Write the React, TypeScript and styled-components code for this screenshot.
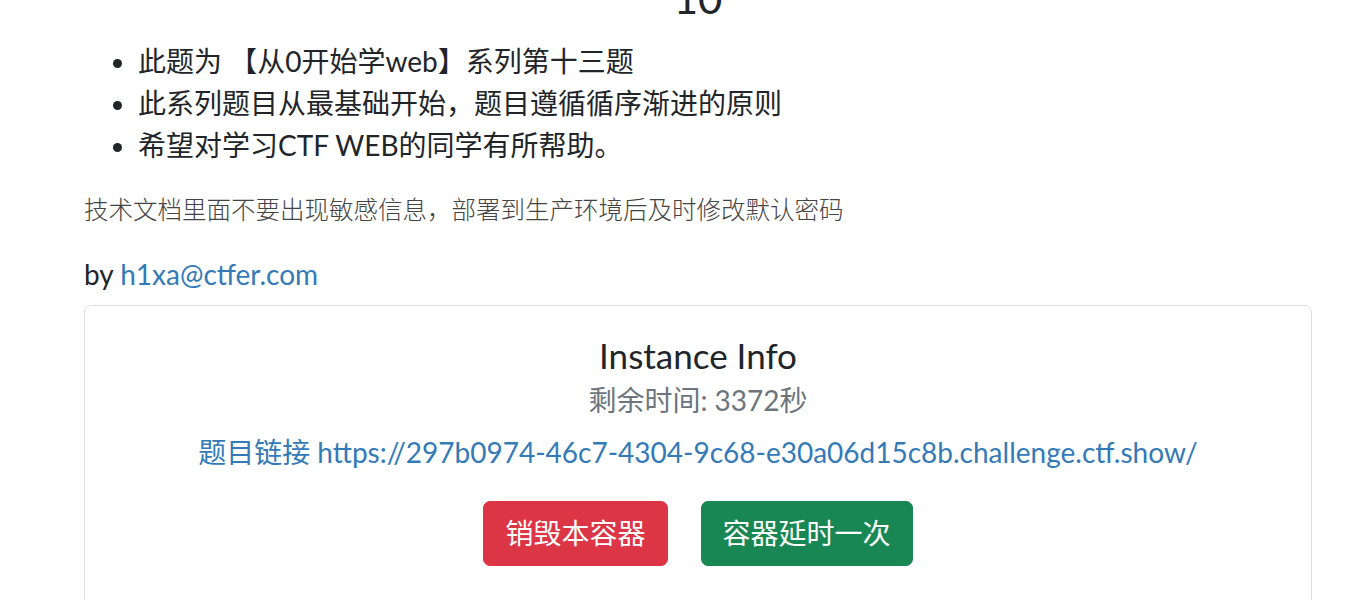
import React from "react";
import styled, { createGlobalStyle } from "styled-components";

const GlobalStyle = createGlobalStyle`
  html, body { margin: 0; padding: 0; background: #ffffff; overflow: hidden; }
  body {
    font-family: Lato, "Noto Sans CJK SC", sans-serif;
    color: #212529;
    font-size: 28px;
    line-height: 1.5;
  }
  * { box-sizing: border-box; }
`;

const Page = styled.div`
  padding: 0 40px 40px 84px;
  height: 600px;
  overflow: hidden;
`;

const Value = styled.h4`
  margin: -27px 0 17px 0;
  font-size: 42px;
  font-weight: 400;
  line-height: 1.2;
  text-align: center;
`;

const List = styled.ul`
  margin: 0 0 25px 0;
  padding-left: 54px;
`;

const Item = styled.li`
  font-size: 28px;
  line-height: 42px;
`;

const Note = styled.p`
  margin: 0 0 26px 0;
  font-family: "Noto Sans CJK SC", sans-serif;
  font-size: 24.5px;
  line-height: 36px;
  color: #444;
  font-weight: 300;
`;

const Byline = styled.p`
  margin: 0 0 10px 0;
  font-size: 28px;
  line-height: 42px;
`;

const Link = styled.a`
  color: #337ab7;
  text-decoration: none;
`;

const Card = styled.div`
  border: 1px solid rgba(0, 0, 0, 0.125);
  border-radius: 7px;
  padding: 28px 35px 60px;
  text-align: center;
`;

const CardTitle = styled.h5`
  margin: 0;
  font-size: 35px;
  font-weight: 400;
  line-height: 1.2;
`;

const CardSubtitle = styled.h6`
  margin: 8px 0 14px 0;
  font-size: 28px;
  font-weight: 400;
  line-height: 1.2;
  color: #6c757d;
`;

const LinkLine = styled.p`
  margin: -1px 0 28px 0;
  font-size: 28px;
  line-height: 42px;
`;

const Actions = styled.div`
  display: flex;
  justify-content: center;
  gap: 33px;
`;

const Button = styled.button<{ $variant: "danger" | "success" }>`
  font-family: Lato, "Noto Sans CJK SC", sans-serif;
  font-size: 28px;
  line-height: 42px;
  padding: 10.5px 21px;
  border-radius: 7px;
  color: #fff;
  border: 1px solid ${(p) => (p.$variant === "danger" ? "#dc3545" : "#198754")};
  background: ${(p) => (p.$variant === "danger" ? "#dc3545" : "#198754")};
  cursor: pointer;
`;

export default function App() {
  return (
    <>
      <GlobalStyle />
      <Page>
        <Value>10</Value>
        <List>
          <Item>此题为 【从0开始学web】系列第十三题</Item>
          <Item>此系列题目从最基础开始，题目遵循循序渐进的原则</Item>
          <Item>希望对学习CTF WEB的同学有所帮助。</Item>
        </List>
        <Note>技术文档里面不要出现敏感信息，部署到生产环境后及时修改默认密码</Note>
        <Byline>
          by <Link href="#">h1xa@ctfer.com</Link>
        </Byline>
        <Card>
          <CardTitle>Instance Info</CardTitle>
          <CardSubtitle>剩余时间: 3372秒</CardSubtitle>
          <LinkLine>
            <Link href="#">题目链接 https://297b0974-46c7-4304-9c68-e30a06d15c8b.challenge.ctf.show/</Link>
          </LinkLine>
          <Actions>
            <Button $variant="danger">销毁本容器</Button>
            <Button $variant="success">容器延时一次</Button>
          </Actions>
        </Card>
      </Page>
    </>
  );
}
